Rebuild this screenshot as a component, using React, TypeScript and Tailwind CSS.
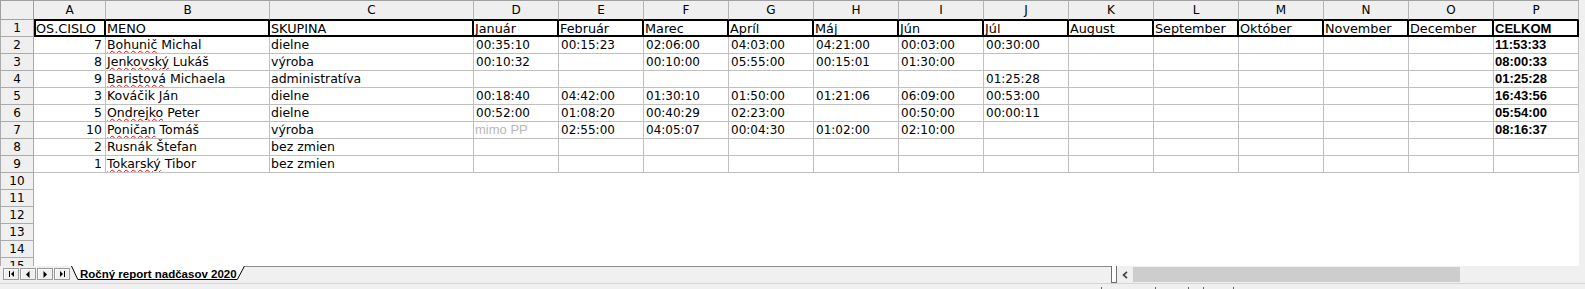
import React from "react";

const COLS = ["A", "B", "C", "D", "E", "F", "G", "H", "I", "J", "K", "L", "M", "N", "O", "P"];
const FIRST_W = ["w-[72px]", "w-[164px]", "w-[204px]"];
const w = (i: number) => (i < 3 ? FIRST_W[i] : "w-[85px]");

const HEAD = [
  "OS.CISLO", "MENO", "SKUPINA", "Január", "Február", "Marec", "Apríl", "Máj", "Jún", "Júl",
  "August", "September", "Október", "November", "December", "CELKOM",
];

type Row = {
  n: number;
  first: string;
  rest: string;
  bad: boolean;
  group: string;
  months: string[];
  total: string;
  mimo?: boolean;
};

const ROWS: Row[] = [
  { n: 7, first: "Bohunič", rest: " Michal", bad: true, group: "dielne", months: ["00:35:10", "00:15:23", "02:06:00", "04:03:00", "04:21:00", "00:03:00", "00:30:00"], total: "11:53:33" },
  { n: 8, first: "Jenkovský", rest: " Lukáš", bad: true, group: "výroba", months: ["00:10:32", "", "00:10:00", "05:55:00", "00:15:01", "01:30:00", ""], total: "08:00:33" },
  { n: 9, first: "Baristová", rest: " Michaela", bad: true, group: "administratíva", months: ["", "", "", "", "", "", "01:25:28"], total: "01:25:28" },
  { n: 3, first: "Kováčik", rest: " Ján", bad: false, group: "dielne", months: ["00:18:40", "04:42:00", "01:30:10", "01:50:00", "01:21:06", "06:09:00", "00:53:00"], total: "16:43:56" },
  { n: 5, first: "Ondrejko", rest: " Peter", bad: true, group: "dielne", months: ["00:52:00", "01:08:20", "00:40:29", "02:23:00", "", "00:50:00", "00:00:11"], total: "05:54:00" },
  { n: 10, first: "Poničan", rest: " Tomáš", bad: true, group: "výroba", months: ["mimo PP", "02:55:00", "04:05:07", "00:04:30", "01:02:00", "02:10:00", ""], total: "08:16:37", mimo: true },
  { n: 2, first: "Rusnák", rest: " Štefan", bad: false, group: "bez zmien", months: ["", "", "", "", "", "", ""], total: "" },
  { n: 1, first: "Tokarský", rest: " Tibor", bad: true, group: "bez zmien", months: ["", "", "", "", "", "", ""], total: "" },
];

const cellBase = "h-[17px] shrink-0 border-r border-b border-[#c0c0c0] flex items-center leading-[16px] whitespace-nowrap overflow-hidden";
const rowHead = "w-[34px] h-[17px] shrink-0 border-l border-r border-b border-[#ababab] bg-[#efefef] flex items-center justify-center text-[12px] leading-[16px]";

function NavButton({ kind }: { kind: number }) {
  return (
    <div className="w-[16px] h-[12px] border border-[#9a9a9a] bg-[#f0f0f0] shadow-[inset_1px_1px_0_#ffffff] flex items-center justify-center">
      {kind === 0 && (
        <svg width="5" height="6" viewBox="0 0 5 6">
          <rect x="0" y="0" width="1" height="6" fill="#000" />
          <polygon points="5,0 5,6 2,3" fill="#000" />
        </svg>
      )}
      {kind === 1 && (
        <svg width="4" height="7" viewBox="0 0 4 7">
          <polygon points="3.5,0 3.5,7 0,3.5" fill="#000" />
        </svg>
      )}
      {kind === 2 && (
        <svg width="4" height="7" viewBox="0 0 4 7">
          <polygon points="0.5,0 0.5,7 4,3.5" fill="#000" />
        </svg>
      )}
      {kind === 3 && (
        <svg width="5" height="6" viewBox="0 0 5 6">
          <polygon points="0,0 0,6 3,3" fill="#000" />
          <rect x="4" y="0" width="1" height="6" fill="#000" />
        </svg>
      )}
    </div>
  );
}

export default function App() {
  return (
    <div className="w-[1585px] h-[289px] overflow-hidden bg-white flex flex-col font-['DejaVu_Sans',sans-serif] text-black">
      {/* grid area */}
      <div className="flex h-[266px] shrink-0 overflow-hidden">
        <div className="w-[1579px] flex flex-col shrink-0">
          {/* column letters */}
          <div className="flex h-[20px] shrink-0">
            <div className="w-[34px] h-[20px] shrink-0 border border-[#a0a0a0] bg-[#efefef]" />
            {COLS.map((c, i) => (
              <div
                key={c}
                className={`${w(i)} h-[20px] shrink-0 border-t border-t-[#a0a0a0] border-b border-b-black border-r border-r-[#b4b4b4] bg-[#efefef] flex items-center justify-center text-[12px] leading-[18px]`}
              >
                {c}
              </div>
            ))}
          </div>

          {/* row 1 */}
          <div className="flex h-[17px] shrink-0">
            <div className={rowHead}>1</div>
            {HEAD.map((t, i) => (
              <div
                key={t}
                className={`${w(i)} h-[17px] shrink-0 border-t border-b-2 border-r-2 border-black ${i === 0 ? "border-l-2" : "pl-[1px]"} flex items-end leading-[12px] whitespace-nowrap ${i === 15 ? "font-['Liberation_Sans',sans-serif] font-bold text-[13px]" : "text-[12.8px]"}`}
              >
                {t}
              </div>
            ))}
          </div>

          {/* rows 2-9 */}
          {ROWS.map((r, ri) => (
            <div key={ri} className="flex h-[17px] shrink-0">
              <div className={rowHead}>{ri + 2}</div>
              <div className={`${w(0)} ${cellBase} justify-end pr-[3px] text-[12.5px]`}>{r.n}</div>
              <div className={`${w(1)} ${cellBase} pl-[1px] text-[12.5px]`}>
                {r.bad ? (
                  <span className="underline decoration-wavy decoration-[#ff0000] decoration-1 underline-offset-[1px]">{r.first}</span>
                ) : (
                  <span>{r.first}</span>
                )}
                <span className="whitespace-pre">{r.rest}</span>
              </div>
              <div className={`${w(2)} ${cellBase} pl-[1px] text-[12.5px]`}>{r.group}</div>
              {r.months.map((m, mi) =>
                r.mimo && mi === 0 ? (
                  <div key={mi} className={`w-[85px] ${cellBase} pl-[1px] font-['Liberation_Sans',sans-serif] text-[13px] text-[#b8b8b8]`}>
                    {m}
                  </div>
                ) : (
                  <div key={mi} className={`w-[85px] ${cellBase} pl-[2px] text-[12px]`}>
                    {m}
                  </div>
                )
              )}
              {[0, 1, 2, 3, 4].map((k) => (
                <div key={`e${k}`} className={`w-[85px] ${cellBase}`} />
              ))}
              <div className={`w-[85px] ${cellBase} pl-[1px] font-['Liberation_Sans',sans-serif] font-bold text-[13px]`}>{r.total}</div>
            </div>
          ))}

          {/* rows 10-15 */}
          {[10, 11, 12, 13, 14, 15].map((n) => (
            <div key={n} className="flex h-[17px] shrink-0">
              <div className={rowHead}>{n}</div>
              <div className="flex-1" />
            </div>
          ))}
        </div>
        <div className="w-[6px] shrink-0 bg-[#f0f0f0]" />
      </div>

      {/* sheet tab strip */}
      <div className="flex h-[17px] shrink-0 bg-[#f0f0f0]">
        <div className="w-[71px] shrink-0 flex items-start gap-[1px] pl-[3px] pt-[2px]">
          <NavButton kind={0} />
          <NavButton kind={1} />
          <NavButton kind={2} />
          <NavButton kind={3} />
        </div>
        <div className="relative w-[174px] h-[17px] shrink-0">
          <svg className="absolute inset-0" width="174" height="17" viewBox="0 0 174 17">
            <polygon points="0,0 6.5,13.5 166.5,13.5 173.5,0" fill="#ffffff" />
            <polyline points="0.5,0 6.8,13.5 166.3,13.5 173.5,0" fill="none" stroke="#000" strokeWidth="1" />
          </svg>
          <div className="relative pl-[9px] pt-[2px] font-['Liberation_Sans',sans-serif] font-bold text-[11.5px] leading-[13px] whitespace-nowrap">
            Ročný report nadčasov 2020
          </div>
        </div>
        <div className="w-[866px] h-[17px] shrink-0 border-t border-[#8c8c8c]" />
        <div className="w-[6px] h-[17px] shrink-0 border-l border-r border-b border-[#6e6e6e] bg-white" />
        <div className="flex-1 flex items-start pl-[5px]">
          <svg className="mt-[5px] shrink-0" width="6" height="8" viewBox="0 0 6 8">
            <polyline points="5,0.8 1.5,4 5,7.2" fill="none" stroke="#454545" strokeWidth="1.7" />
          </svg>
          <div className="ml-[5px] mt-[1px] w-[327px] h-[15px] bg-[#cdcdcd]" />
        </div>
      </div>

      {/* status bar */}
      <div className="flex h-[6px] shrink-0 border-t border-[#d4d4d4] bg-[#f0f0f0] items-end">
        <div className="ml-[1101px] w-px h-[2px] bg-[#606060]" />
        <div className="ml-[53px] w-px h-[2px] bg-[#606060]" />
        <div className="ml-[32px] w-px h-[2px] bg-[#606060]" />
        <div className="ml-[14px] w-px h-[2px] bg-[#606060]" />
        <div className="ml-[29px] w-px h-[2px] bg-[#606060]" />
      </div>
    </div>
  );
}
